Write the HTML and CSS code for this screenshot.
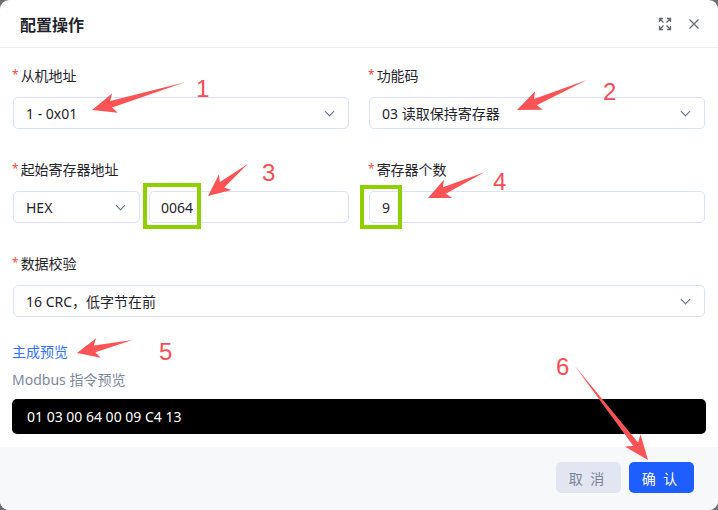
FILE: index.html
```html
<!DOCTYPE html>
<html lang="zh-CN">
<head>
    <meta charset="UTF-8">
    <meta name="viewport" content="width=device-width, initial-scale=1.0">
    <title>配置操作</title>
    <link rel="stylesheet" href="styles.css">
</head>
<body>
    <div class="modal">
        <div class="modal-header">
            <span class="modal-title">配置操作</span>
            <div class="header-tools">
                <svg class="tool-icon" width="14" height="14" viewBox="0 0 14 14">
                    <path d="M1.5 5V1.5H5M1.5 1.5l4 4M12.5 5V1.5H9M12.5 1.5l-4 4M1.5 9v3.5H5M1.5 12.5l4-4M12.5 9v3.5H9M12.5 12.5l-4-4"/>
                </svg>
                <svg class="tool-icon" width="12" height="12" viewBox="0 0 12 12">
                    <path d="M1.5 1.5l9 9M10.5 1.5l-9 9"/>
                </svg>
            </div>
        </div>

        <div class="modal-body">
            <div class="form-row two">
                <div class="form-item">
                    <label class="form-label"><span class="req">*</span>从机地址</label>
                    <div class="select"><span>1 - 0x01</span><i class="chev"></i></div>
                </div>
                <div class="form-item">
                    <label class="form-label"><span class="req">*</span>功能码</label>
                    <div class="select"><span>03 读取保持寄存器</span><i class="chev"></i></div>
                </div>
            </div>

            <div class="form-row two">
                <div class="form-item">
                    <label class="form-label"><span class="req">*</span>起始寄存器地址</label>
                    <div class="addr-group">
                        <div class="select select-hex"><span>HEX</span><i class="chev"></i></div>
                        <div class="input input-addr">0064</div>
                    </div>
                </div>
                <div class="form-item">
                    <label class="form-label"><span class="req">*</span>寄存器个数</label>
                    <div class="input input-count">9</div>
                </div>
            </div>

            <div class="form-row">
                <div class="form-item">
                    <label class="form-label"><span class="req">*</span>数据校验</label>
                    <div class="select"><span>16 CRC，低字节在前</span><i class="chev"></i></div>
                </div>
            </div>

            <a class="preview-link">主成预览</a>
            <div class="preview-title">Modbus 指令预览</div>
            <div class="preview-box">01 03 00 64 00 09 C4 13</div>
        </div>

        <div class="modal-footer">
            <button class="btn btn-cancel">取 消</button>
            <button class="btn btn-ok">确 认</button>
        </div>

        <!-- annotations drawn on top of the screenshot -->
        <div class="mark mark-addr"></div>
        <div class="mark mark-count"></div>

        <svg class="arrows" width="718" height="510" viewBox="0 0 718 510">
            <g transform="translate(92 110) rotate(163.3)"><polygon points="-97,0 -20,-3.5 -24,-10 0,0 -24,10 -20,3.5"/></g>
            <g transform="translate(517 110) rotate(156.8)"><polygon points="-76,0 -20,-3.5 -24,-10 0,0 -24,10 -20,3.5"/></g>
            <g transform="translate(208 196) rotate(141.3)"><polygon points="-51,0 -18,-3.5 -22,-10 0,0 -22,10 -18,3.5"/></g>
            <g transform="translate(428 198) rotate(155.5)"><polygon points="-62,0 -18,-3.5 -22,-10 0,0 -22,10 -18,3.5"/></g>
            <g transform="translate(77 353) rotate(166.9)"><polygon points="-57,0 -18,-3.5 -22,-10 0,0 -22,10 -18,3.5"/></g>
            <g transform="translate(648 460) rotate(52.1)"><polygon points="-120,0 -20,-3 -25,-10 0,0 -25,10 -20,3"/></g>
        </svg>
        <span class="num n1">1</span>
        <span class="num n2">2</span>
        <span class="num n3">3</span>
        <span class="num n4">4</span>
        <span class="num n5">5</span>
        <span class="num n6">6</span>
    </div>
</body>
</html>
```

FILE: styles.css
```css
* { box-sizing: border-box; }
body { margin: 0; background: #6e6e6e; font-family: "Noto Sans", "Noto Sans CJK SC", sans-serif; color: #1f2329; }

.modal { position: relative; width: 718px; height: 510px; background: #fff; border-radius: 9px; overflow: hidden; display: flex; flex-direction: column; }

.modal-header { height: 48px; flex: none; display: flex; align-items: center; justify-content: space-between; padding: 0 18px 0 20px; border-bottom: 1px solid #eef0f4; }
.modal-title { font-size: 16px; font-weight: 600; color: #1f2329; }
.header-tools { display: flex; align-items: center; gap: 16px; }
.tool-icon { fill: none; stroke: #646a73; stroke-width: 1.3; }

.modal-body { flex: 1; padding: 17px 13px 0 12px; }
.form-row { margin-bottom: 30px; }
.form-row.two { display: grid; grid-template-columns: 1fr 1fr; gap: 19px; }
.form-label { display: block; height: 22px; line-height: 22px; font-size: 14px; color: #1f2329; margin-bottom: 10px; }
.req { color: #f54a45; font-size: 12px; margin-right: 2px; vertical-align: top; position: relative; top: -1px; }

.select, .input { height: 32px; border: 1px solid #d8e2fb; border-radius: 5px; background: #fff; font-size: 14px; color: #1f2329; display: flex; align-items: center; padding: 0 12px; margin-left: 1px; }
.select { justify-content: space-between; }
.chev { width: 7px; height: 7px; border-right: 1.3px solid #5d6b8a; border-bottom: 1.3px solid #5d6b8a; transform: rotate(45deg); margin: -4px 3px 0 0; }

.addr-group { display: flex; gap: 9px; }
.select-hex { width: 127px; flex: none; }
.input-addr { flex: 1; margin-left: 0; padding-left: 11px; }
.input-count { padding-left: 12px; }

.preview-link { display: block; font-size: 14px; line-height: 22px; color: #3370ff; margin-top: -6px; }
.preview-title { font-size: 14px; line-height: 22px; color: #7d879c; margin-top: 6px; }
.preview-box { margin-top: 8px; height: 35px; background: #000; color: #fff; border-radius: 5px; font-size: 14px; line-height: 35px; padding-left: 15px; width: 694px; }

.modal-footer { height: 63px; flex: none; background: #f7f8fa; display: flex; justify-content: flex-end; align-items: center; gap: 8px; padding: 0 24px 2px 0; }
.btn { width: 65px; height: 31px; border: none; border-radius: 5px; font-family: inherit; font-size: 14px; letter-spacing: 2px; padding-left: 4px; }
.btn-cancel { background: #e1e6f0; color: #7b8499; }
.btn-ok { background: #1e5eff; color: #fff; }

.mark { position: absolute; border: 4px solid #8ed000; }
.mark-addr { left: 143px; top: 183px; width: 58px; height: 46px; }
.mark-count { left: 360px; top: 185px; width: 42px; height: 44px; }

.arrows { position: absolute; left: 0; top: 0; fill: #fb5356; pointer-events: none; }
.num { position: absolute; font-family: "Liberation Sans", sans-serif; font-size: 24px; line-height: 24px; color: #fb4c55; }
.n1 { left: 196px; top: 77px; }
.n2 { left: 603px; top: 80px; }
.n3 { left: 262px; top: 161px; }
.n4 { left: 493px; top: 170px; }
.n5 { left: 159px; top: 340px; }
.n6 { left: 556px; top: 355px; }
```
